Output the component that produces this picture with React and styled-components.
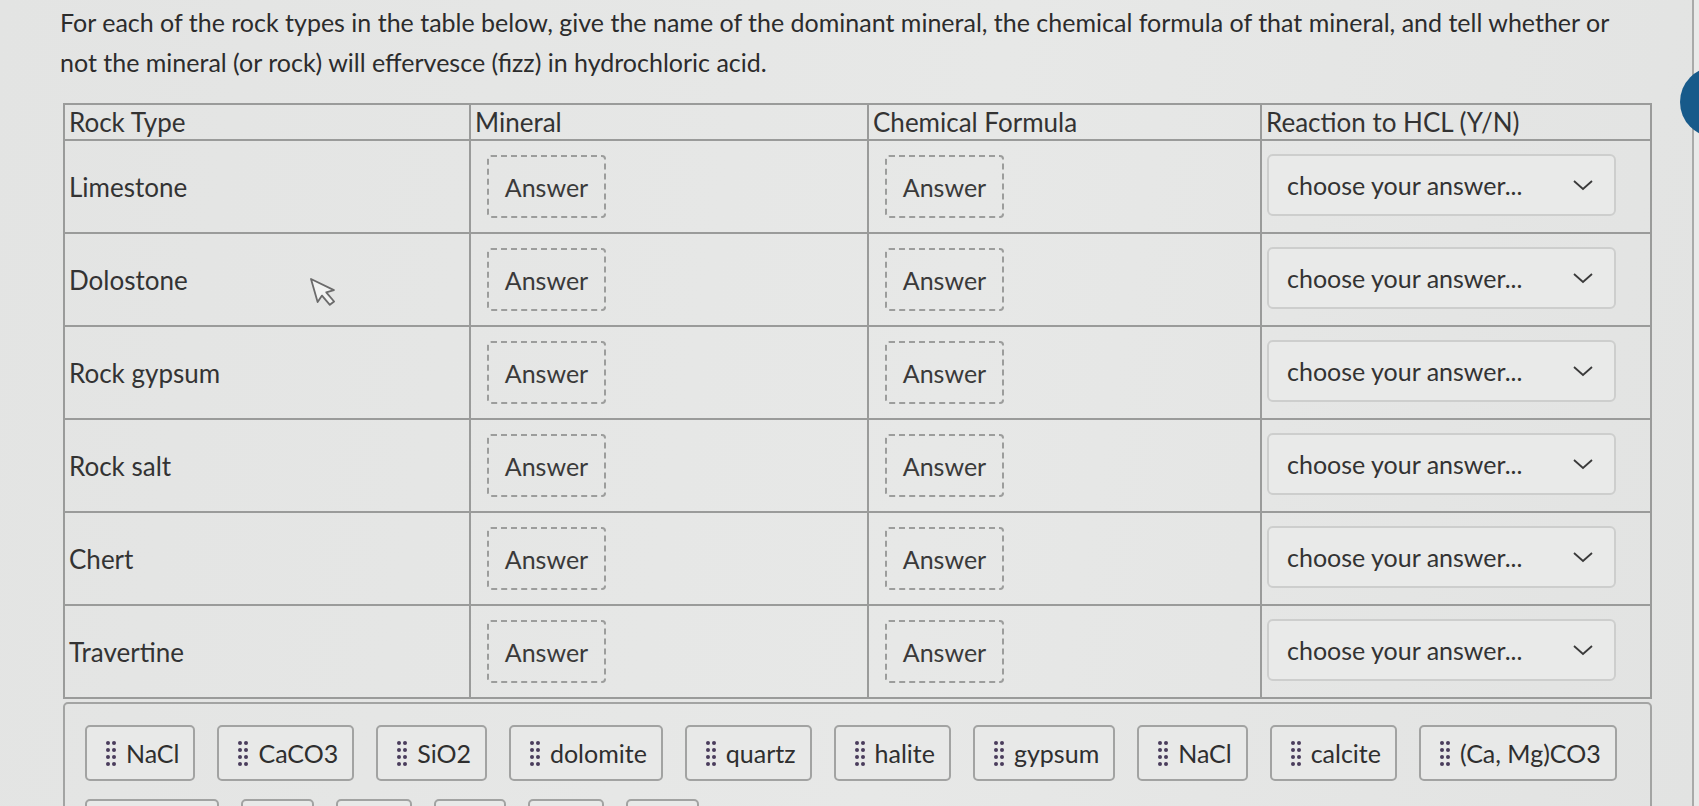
import React from "react";
import styled, { createGlobalStyle } from "styled-components";

const Global = createGlobalStyle`
  html, body {
    margin: 0;
    padding: 0;
    background: #e4e5e4;
    font-family: Lato, "Open Sans", sans-serif;
    color: #2e2e2e;
    overflow: hidden;
  }
`;

const Screen = styled.div`
  position: relative;
  display: flex;
  width: 1699px;
  height: 806px;
  overflow: hidden;
  background: linear-gradient(100deg, #e3e4e3 0%, #e7e8e7 55%, #e2e3e2 100%);
`;

const Main = styled.div`
  flex: 1;
  padding: 2px 0 0 60px;
`;

const EdgeStrip = styled.div`
  width: 5px;
  border-left: 2px solid #a9aaa9;
  background: #e9eae9;
`;

const Prompt = styled.p`
  margin: 0 0 21px;
  width: 1572px;
  font-size: 25px;
  line-height: 40px;
  color: #2c2c2c;
`;

const Table = styled.table`
  width: 1589px;
  border-collapse: collapse;
  table-layout: fixed;
  margin-left: 3px;
  font-size: 26px;
  color: #333;
`;

const Th = styled.th`
  width: ${(p) => p.$w || "auto"};
  height: 34px;
  padding: 0 4px;
  border: 2px solid #9a9b9a;
  text-align: left;
  font-weight: 400;
  vertical-align: middle;
`;

const Td = styled.td`
  height: 91px;
  padding: 0 4px 0 ${(p) => p.$pl || "4px"};
  border: 2px solid #9a9b9a;
  vertical-align: ${(p) => (p.$top ? "top" : "middle")};
`;

const Drop = styled.div`
  display: inline-flex;
  align-items: center;
  justify-content: center;
  width: 119px;
  height: 63px;
  box-sizing: border-box;
  border: 2px dashed #9c9d9c;
  border-radius: 4px;
  font-size: 25px;
  color: #3a3a3a;
`;

const Select = styled.div`
  display: flex;
  align-items: center;
  justify-content: space-between;
  width: 349px;
  height: 62px;
  box-sizing: border-box;
  margin-top: 13px;
  padding: 0 20px 0 18px;
  border: 2px solid #cdcecd;
  border-radius: 6px;
  background: #e9eae9;
  font-size: 25px;
  color: #333;
`;

const Bank = styled.div`
  display: flex;
  flex-wrap: wrap;
  gap: 18px 22px;
  width: 1589px;
  box-sizing: border-box;
  margin: 3px 0 0 3px;
  padding: 21px 14px 21px 20px;
  border: 2px solid #a3a4a3;
  border-radius: 5px;
`;

const Chip = styled.div`
  display: flex;
  align-items: center;
  gap: 10px;
  height: 56px;
  box-sizing: border-box;
  padding: 0 14px 0 19px;
  border: 2px solid #a2a3a2;
  border-radius: 5px;
  background: #e8e9e8;
  font-size: 25px;
  color: #2f2f2f;
  white-space: nowrap;
`;

const Handle = styled.span`
  display: grid;
  grid-template-columns: repeat(2, 4px);
  grid-template-rows: repeat(4, 4px);
  gap: 3px 2px;
  span {
    width: 4px;
    height: 4px;
    border-radius: 50%;
    background: #4a3d5c;
  }
`;

const Badge = styled.div`
  position: absolute;
  left: 1680px;
  top: 67px;
  width: 70px;
  height: 70px;
  border-radius: 50%;
  background: #175a8a;
`;

const Cursor = styled.svg`
  position: absolute;
  left: 309px;
  top: 277px;
`;

const rows = ["Limestone", "Dolostone", "Rock gypsum", "Rock salt", "Chert", "Travertine"];
const chips = [
  "NaCl", "CaCO3", "SiO2", "dolomite", "quartz", "halite", "gypsum", "NaCl", "calcite", "(Ca, Mg)CO3",
  "CaSO4", "Y", "N", "Y", "N", "Y",
];

const Dots = () => (
  <Handle>
    {Array.from({ length: 8 }).map((_, i) => (
      <span key={i} />
    ))}
  </Handle>
);

const Chevron = () => (
  <svg width="22" height="12" viewBox="0 0 22 12">
    <path d="M2 2 L11 10 L20 2" fill="none" stroke="#3a3a3a" strokeWidth="1.8" />
  </svg>
);

export default function App() {
  return (
    <Screen>
      <Global />
      <Main>
        <Prompt>
          For each of the rock types in the table below, give the name of the dominant mineral, the chemical formula of
          that mineral, and tell whether or not the mineral (or rock) will effervesce (fizz) in hydrochloric acid.
        </Prompt>
        <Table>
          <thead>
            <tr>
              <Th $w="396px">Rock Type</Th>
              <Th $w="388px">Mineral</Th>
              <Th $w="383px">Chemical Formula</Th>
              <Th>Reaction to HCL (Y/N)</Th>
            </tr>
          </thead>
          <tbody>
            {rows.map((r) => (
              <tr key={r}>
                <Td>{r}</Td>
                <Td $pl="16px">
                  <Drop>Answer</Drop>
                </Td>
                <Td $pl="16px">
                  <Drop>Answer</Drop>
                </Td>
                <Td $top $pl="5px">
                  <Select>
                    <span>choose your answer...</span>
                    <Chevron />
                  </Select>
                </Td>
              </tr>
            ))}
          </tbody>
        </Table>
        <Bank>
          {chips.map((c, i) => (
            <Chip key={i}>
              <Dots />
              {c}
            </Chip>
          ))}
        </Bank>
      </Main>
      <EdgeStrip />
      <Badge />
      <Cursor width="30" height="36" viewBox="0 0 30 36">
        <path
          d="M2 2 L2 26 L8 21 L13 32 L18 30 L13 19 L21 19 Z"
          fill="#f2f3f2"
          stroke="#6b6b6b"
          strokeWidth="1.8"
          strokeLinejoin="round"
          transform="rotate(-16 2 2)"
        />
      </Cursor>
    </Screen>
  );
}
